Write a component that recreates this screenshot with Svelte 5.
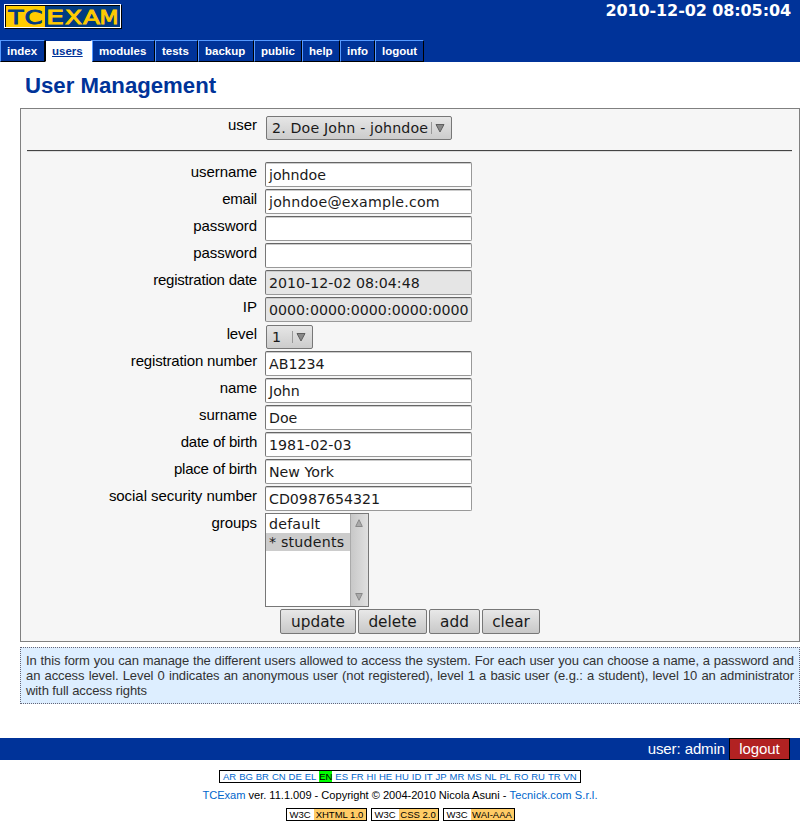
<script>
  const tabs = [
    { label: 'index', w: 45 },
    { label: 'users', w: 47, active: true },
    { label: 'modules', w: 63 },
    { label: 'tests', w: 43 },
    { label: 'backup', w: 56 },
    { label: 'public', w: 48 },
    { label: 'help', w: 38 },
    { label: 'info', w: 35 },
    { label: 'logout', w: 49 }
  ];
  const fields = [
    { label: 'username', value: 'johndoe', ls: -0.05 },
    { label: 'email', value: 'johndoe@example.com', ls: -0.2 },
    { label: 'password', value: '', ls: -0.05 },
    { label: 'password', value: '', ls: -0.05 },
    { label: 'registration date', value: '2010-12-02 08:04:48', readonly: true, ls: -0.22 },
    { label: 'IP', value: '0000:0000:0000:0000:0000', readonly: true, ls: 0 },
    { label: 'level', value: '1', select: true, ls: -0.1 },
    { label: 'registration number', value: 'AB1234', ls: -0.16 },
    { label: 'name', value: 'John', ls: -0.05 },
    { label: 'surname', value: 'Doe', ls: -0.05 },
    { label: 'date of birth', value: '1981-02-03', ls: -0.22 },
    { label: 'place of birth', value: 'New York', ls: -0.2 },
    { label: 'social security number', value: 'CD0987654321', ls: -0.05 }
  ];
  const buttons = [
    { label: 'update', w: 76 },
    { label: 'delete', w: 69 },
    { label: 'add', w: 51 },
    { label: 'clear', w: 58 }
  ];
  const langs = 'AR BG BR CN DE EL EN ES FR HI HE HU ID IT JP MR MS NL PL RO RU TR VN'.split(' ');
  const badges = [
    { name: 'XHTML 1.0', w: 81 },
    { name: 'CSS 2.0', w: 68 },
    { name: 'WAI-AAA', w: 72 }
  ];
  const help = [
    'In this form you can manage the different users allowed to access the system. For each user you can choose a name, a password and',
    'an access level. Level 0 indicates an anonymous user (not registered), level 1 a basic user (e.g.: a student), level 10 an administrator',
    'with full access rights'
  ];
  const wordmark = [
    { c: 'T', x: 4.5, w: 15, dark: true },
    { c: 'C', x: 20.5, w: 18, dark: true },
    { c: 'E', x: 42, w: 18 },
    { c: 'X', x: 61, w: 17 },
    { c: 'A', x: 79, w: 17 },
    { c: 'M', x: 95.5, w: 19 }
  ];
</script>

{#snippet arrow()}
  <svg class="arrow" width="14" height="12" viewBox="0 0 14 12">
    <path d="M.5 0V12" stroke="#999" />
    <path d="M5 2.5H13L9 10Z" fill="#888" stroke="#555" stroke-width=".9" />
  </svg>
{/snippet}

<div class="page">
  <header>
    <div class="top">
      <svg class="logo" width="118" height="26" viewBox="0 0 118 26">
        <rect x="1" y="1" width="117" height="24" fill="#000" />
        <rect width="117" height="24" fill="#fff" />
        <rect x="1" y="1" width="115" height="22" fill="#000" />
        <rect x="2" y="2" width="39" height="21" fill="#fc0" />
        <rect x="41" y="2" width="75" height="21" fill="#003b82" />
        <g font-family="DejaVu Sans" font-size="19.5" stroke-width=".9">
          {#each wordmark as l}
            <text x={l.x} y="19.5" textLength={l.w} lengthAdjust="spacingAndGlyphs" fill={l.dark ? '#003b82' : '#fc0'} stroke={l.dark ? '#003b82' : '#fc0'}>{l.c}</text>
          {/each}
        </g>
      </svg>
      <span class="clock">2010-12-02 08:05:04</span>
    </div>
    <nav>
      {#each tabs as t}
        <a class:active={t.active} style:width="{t.w}px"><span>{t.label}</span></a>
      {/each}
    </nav>
  </header>

  <main>
    <h1>User Management</h1>
    <section class="form">
      <div class="row first">
        <label>user</label>
        <div class="select wide"><span>2. Doe John - johndoe</span>{@render arrow()}</div>
      </div>
      <hr />
      {#each fields as f}
        <div class="row">
          <label style:letter-spacing="{f.ls}px">{f.label}</label>
          {#if f.select}
            <div class="select"><span>{f.value}</span>{@render arrow()}</div>
          {:else}
            <div class="input" class:readonly={f.readonly} class:alpha={f.value.length > 10 && /[a-z]/.test(f.value)}>{f.value}</div>
          {/if}
        </div>
      {/each}
      <div class="row groups">
        <label>groups</label>
        <div class="list">
          <div class="options">
            <div>default</div>
            <div class="sel">* students</div>
          </div>
          <div class="scroll">
            <svg width="8" height="8" viewBox="0 0 8 8"><path d="M.7 7.5H7.3L4 .7Z" fill="#aaa" stroke="#888" /></svg>
            <svg width="8" height="8" viewBox="0 0 8 8"><path d="M.7 .5H7.3L4 7.3Z" fill="#aaa" stroke="#888" /></svg>
          </div>
        </div>
      </div>
      <div class="buttons">
        {#each buttons as b}
          <button style:width="{b.w}px">{b.label}</button>
        {/each}
      </div>
    </section>
    <div class="help">
      {#each help as line}<p>{line}</p>{/each}
    </div>
  </main>

  <div class="userbar"><span>user: admin</span><a class="logout">logout</a></div>

  <footer>
    <div class="langs">
      {#each langs as l}<a class:current={l === 'EN'}>{l}</a>{/each}
    </div>
    <div class="copy"><a>TCExam</a> ver. 11.1.009 - Copyright © 2004-2010 Nicola Asuni - <a class="vendor">Tecnick.com S.r.l.</a></div>
    <div class="badges">
      {#each badges as b}
        <div class="badge" style:width="{b.w}px"><span>W3C</span><b>{b.name}</b></div>
      {/each}
    </div>
  </footer>
</div>

<style>
  :global(body) { background: #fff; }
  .page, .page * { box-sizing: border-box; }
  .page {
    width: 800px;
    height: 825px;
    overflow: hidden;
    font-family: "Liberation Sans", Arial, sans-serif;
    color: #000;
    white-space: nowrap;
  }
  header { height: 62px; background: #039; }
  .top { display: flex; justify-content: space-between; height: 40px; padding: 4px 9px 0 4px; }
  .clock { font: bold 16px/20px "DejaVu Sans", sans-serif; letter-spacing: -0.1px; color: #fff; margin-top: -3px; }
  nav { display: flex; height: 22px; }
  nav a {
    padding-left: 6px;
    border: 1px solid #000;
    border-top-color: #59f;
    border-left-color: #59f;
    background: #039;
    color: #fff;
    font-weight: bold;
    font-size: 11.5px;
    line-height: 20px;
  }
  nav a.active { background: #fff; color: #039; border-color: #fff; border-left-color: #000; border-top-color: #039; text-decoration: underline; }
  main { padding-left: 20px; }
  h1 { margin: 0; height: 46px; padding: 11px 0 0 5px; font-size: 22.2px; line-height: 26px; color: #039; }
  .form { height: 534px; border: 1px solid #808080; background: #f6f6f6; padding: 7px 7px 0 6px; }
  .row { display: flex; height: 27px; }
  .first { height: 34px; }
  label { width: 230px; margin-right: 8px; text-align: right; font-size: 15px; line-height: 20px; letter-spacing: -0.05px; }
  .first label { line-height: 18px; }
  hr { margin: 0 0 10px; height: 2px; border: 0; border-top: 1px solid #444; border-bottom: 1px solid #ddd; }
  .input, .select, .list { font-family: "DejaVu Sans", sans-serif; font-size: 14.2px; color: #1a1a1a; }
  .input {
    width: 207px;
    height: 25px;
    border: 1px solid #999;
    border-top-color: #666;
    border-left-color: #777;
    border-radius: 2px;
    box-shadow: inset 0 1px #ccc;
    background: #fff;
    padding: 1px 0 0 3px;
    line-height: 23px;
  }
  .alpha, .options { letter-spacing: 0.2px; }
  .input.readonly { background: #e5e5e5; }
  .select {
    display: flex;
    align-items: center;
    justify-content: space-between;
    width: 47px;
    height: 24px;
    margin: 1px 0 0 1px;
    padding: 0 6px 0 5px;
    border: 1px solid #777;
    border-radius: 2px;
    background: linear-gradient(#e6e6e6, #ccc);
    line-height: 22px;
  }
  .select.wide { width: 186px; margin-top: 0; letter-spacing: 0.16px; }
  .groups { height: 95px; }
  .list { display: flex; width: 104px; height: 94px; border: 1px solid #777; background: #fff; line-height: 18px; padding-top: 1px; }
  .options { width: 84px; }
  .options div { height: 18px; padding-left: 3px; }
  .options .sel { background: #ccc; }
  .scroll {
    display: flex;
    flex-direction: column;
    justify-content: space-between;
    align-items: center;
    flex: 1;
    margin-top: -1px;
    padding: 5px 2px 5px 0;
    border-left: 1px solid #aaa;
    background: linear-gradient(90deg, #c8c8c8, #e0e0e0);
  }
  .buttons { display: flex; gap: 2px; margin-left: 253px; padding-top: 1px; }
  button {
    height: 25px;
    padding: 0;
    border: 1px solid #777;
    border-radius: 2px;
    background: linear-gradient(#e8e8e8, #c8c8c8);
    font: 15.3px/22px "DejaVu Sans", sans-serif;
    color: #1a1a1a;
  }
  .help {
    height: 57px;
    margin-top: 5px;
    padding: 5px 5px 0;
    border: 1px dotted #667;
    background: #def;
    color: #333;
    font-size: 13px;
    line-height: 15px;
    letter-spacing: -0.08px;
  }
  .help p { margin: 0; text-align: justify; text-align-last: justify; white-space: normal; }
  .help p:last-child { text-align-last: left; }
  .userbar {
    display: flex;
    justify-content: flex-end;
    height: 22px;
    margin-top: 34px;
    padding-right: 10px;
    background: #039;
    color: #fff;
    font-size: 15px;
    line-height: 22px;
    letter-spacing: -0.1px;
  }
  .logout { width: 61px; margin-left: 4px; border: 1px solid #000; background: #b22222; text-align: center; line-height: 20px; }
  footer { display: flex; flex-direction: column; align-items: center; padding-top: 10px; }
  footer a { color: #06c; }
  .langs { display: flex; width: 362px; height: 13px; justify-content: space-between; padding: 0 3px; border: 1px solid #000; font-size: 9.5px; line-height: 12px; }
  .langs .current { height: 11px; background: #0f0; color: #000; }
  .copy { height: 25px; padding-top: 5px; font-size: 11.1px; line-height: 15px; letter-spacing: -0.02px; }
  .vendor { letter-spacing: 0.1px; }
  .badges { display: flex; gap: 4px; }
  .badge { display: flex; height: 13px; border: 1px solid #000; font-size: 9.5px; line-height: 11px; }
  .badge span { width: 27px; text-align: center; }
  .badge b { flex: 1; background: #fc6; font-weight: normal; text-align: center; }
</style>
